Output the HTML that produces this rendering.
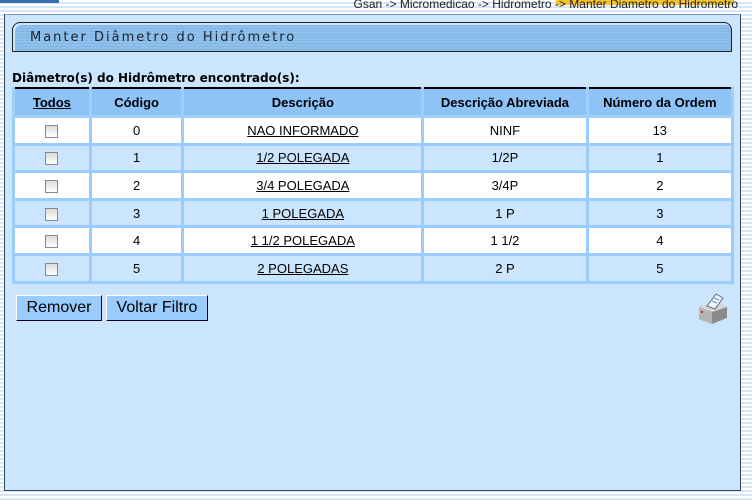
<!DOCTYPE html>
<html><head><meta charset="utf-8"><style>
body{margin:0;width:752px;height:500px;overflow:hidden;font-family:"Liberation Sans",sans-serif;background:repeating-linear-gradient(#fff 0,#fff 2px,#d6e6f6 2px,#d6e6f6 4px);position:relative}
.a{position:absolute}
#crumb{left:0;top:-3px;width:738px;text-align:right;font-size:12px;color:#222;white-space:nowrap}
#panel{left:4px;top:14px;width:735px;height:475px;background:#cbe5fd;border:1px solid #34495e;border-top:1px solid #7b9cc0}
#title{left:12px;top:22px;width:718px;height:28px;border:1px solid #222;border-radius:8px 8px 0 0;background:repeating-linear-gradient(#8fc0ec 0,#8fc0ec 2px,#84b6e4 2px,#84b6e4 3px);box-shadow:inset 2px 2px 0 #cfe6ff}
#title span{position:absolute;left:17px;top:7px;font-family:"DejaVu Sans",sans-serif;font-size:13px;letter-spacing:2px;color:#1a2230}
#cap{left:12px;top:71px;font-family:"DejaVu Sans",sans-serif;font-weight:bold;font-size:12px;color:#000}
table{position:absolute;left:12px;top:87px;width:722px;border-collapse:collapse;border-top:2px solid #000;font-size:13px}
td{border:3px solid #99ccff;text-align:center;height:24.6px;padding:0;color:#000}
tr.h td{background:#8ec3f8;font-weight:bold;border-color:#9fcffd;height:26px;border-top:none}
tr.w td{background:#fff}tr.b td{background:#cce5ff}
u{text-decoration:underline}
.cb{display:inline-block;width:11px;height:11px;border:1px solid #888;background:linear-gradient(#dcdcdc,#fff);vertical-align:middle}
.btn{top:295px;height:24px;background:#99ccff;border:1px solid;border-color:#fff #002 #002 #fff;font-size:16px;line-height:24px;text-align:center;color:#000}
</style></head><body>
<div class="a" style="left:0;top:0;width:59px;height:3px;background:#3a6fb0"></div>
<div class="a" style="left:556px;top:0;width:178px;height:5px;background:#f4c430"></div>
<div class="a" id="crumb">Gsan -&gt; Micromedicao -&gt; Hidrometro -&gt; Manter Diametro do Hidrometro</div>
<div class="a" id="panel"></div>
<div class="a" id="title"><span>Manter Diâmetro do Hidrômetro</span></div>
<div class="a" id="cap">Diâmetro(s) do Hidrômetro encontrado(s):</div>
<table>
<colgroup><col style="width:77px"><col style="width:93px"><col style="width:241px"><col style="width:165px"><col style="width:146px"></colgroup>
<tr class="h"><td><u>Todos</u></td><td>Código</td><td>Descrição</td><td>Descrição Abreviada</td><td>Número da Ordem</td></tr>
<tr class="w"><td><span class="cb"></span></td><td>0</td><td><u>NAO INFORMADO</u></td><td>NINF</td><td>13</td></tr>
<tr class="b"><td><span class="cb"></span></td><td>1</td><td><u>1/2 POLEGADA</u></td><td>1/2P</td><td>1</td></tr>
<tr class="w"><td><span class="cb"></span></td><td>2</td><td><u>3/4 POLEGADA</u></td><td>3/4P</td><td>2</td></tr>
<tr class="b"><td><span class="cb"></span></td><td>3</td><td><u>1 POLEGADA</u></td><td>1 P</td><td>3</td></tr>
<tr class="w"><td><span class="cb"></span></td><td>4</td><td><u>1 1/2 POLEGADA</u></td><td>1 1/2</td><td>4</td></tr>
<tr class="b"><td><span class="cb"></span></td><td>5</td><td><u>2 POLEGADAS</u></td><td>2 P</td><td>5</td></tr>
</table>
<div class="a btn" style="left:16px;width:84px">Remover</div>
<div class="a btn" style="left:106px;width:100px">Voltar Filtro</div>
<svg class="a" style="left:696px;top:292px" width="34" height="34" viewBox="0 0 34 34">
<path d="M3 15 L20 10 L31 15 L31 26 L16 32 L3 27 Z" fill="#8a8a8a"/>
<path d="M3 15 L20 10 L31 15 L16 20 Z" fill="#d8d8d8"/>
<path d="M3 15 L16 20 L16 32 L3 27Z" fill="#b5b5b5"/>
<path d="M11 14 L20 2 L27 6 L19 17 Z" fill="#eef4fb" stroke="#667" stroke-width="1"/>
<path d="M18 6 L23 8 M16 9 L21 11" stroke="#5a8ad0" stroke-width="1"/>
<rect x="5" y="19" width="2" height="2" fill="#c33"/>
</svg>
</body></html>
